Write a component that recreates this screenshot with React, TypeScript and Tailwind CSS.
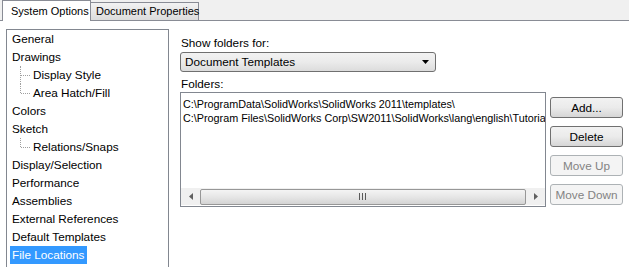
import React from "react";

const treeItems: { label: string; child?: boolean; last?: boolean }[] = [
  { label: "General" },
  { label: "Drawings" },
  { label: "Display Style", child: true },
  { label: "Area Hatch/Fill", child: true, last: true },
  { label: "Colors" },
  { label: "Sketch" },
  { label: "Relations/Snaps", child: true, last: true },
  { label: "Display/Selection" },
  { label: "Performance" },
  { label: "Assemblies" },
  { label: "External References" },
  { label: "Default Templates" },
  { label: "File Locations" },
];

function TreeRow({ label, child, last, selected }: { label: string; child?: boolean; last?: boolean; selected?: boolean }) {
  return (
    <div className="relative flex h-[18px] items-center">
      {child && (
        <>
          <span
            className={`absolute left-[13px] top-0 w-0 border-l border-dotted border-[#a0a0a0] ${last ? "h-[9px]" : "h-[18px]"}`}
          />
          <span className="absolute left-[14px] top-[9px] w-[9px] border-t border-dotted border-[#a0a0a0]" />
        </>
      )}
      <span
        className={`flex h-[18px] items-center whitespace-nowrap px-[2px] ${child ? "ml-[24px]" : "ml-[3px]"} ${
          selected ? "bg-[#3399ff] text-white" : "text-black"
        }`}
      >
        {label}
      </span>
    </div>
  );
}

function Button({ label, disabled }: { label: string; disabled?: boolean }) {
  return (
    <div
      className={`flex h-[21px] w-[73px] items-center justify-center rounded-[3px] border ${
        disabled
          ? "border-[#adb2b5] bg-[#f4f4f4] text-[#838383]"
          : "border-[#707070] bg-gradient-to-b from-[#f2f2f2] via-[#ebebeb] to-[#d6d6d6] text-black"
      }`}
    >
      {label}
    </div>
  );
}

export default function App() {
  return (
    <div
      className="h-[267px] w-[629px] overflow-hidden bg-white text-[11.75px] text-black"
      style={{ fontFamily: '"Liberation Sans", Arial, sans-serif' }}
    >
      {/* tabs */}
      <div className="flex h-[21px] items-end whitespace-nowrap border-b border-[#898c95] bg-[#f0f0f0] pl-[2px] text-[11px]">
        <div className="relative z-10 mb-[-1px] flex h-[21px] w-[89px] items-center border border-b-0 border-[#898c95] bg-white pl-[8px]">
          System Options
        </div>
        <div className="flex h-[18px] w-[108px] items-center border border-b-0 border-l-0 border-[#898c95] bg-gradient-to-b from-[#f2f2f2] to-[#dcdcdc] pl-[5px]">
          Document Properties
        </div>
      </div>

      <div className="flex">
        {/* tree */}
        <div className="ml-[6px] mt-[8px] h-[260px] w-[163px] shrink-0 border border-[#828790]">
          {treeItems.map((t, i) => (
            <TreeRow key={t.label} {...t} selected={i === treeItems.length - 1} />
          ))}
        </div>

        {/* right panel */}
        <div className="ml-[11px] mt-[14px] flex flex-col">
          <div className="h-[15px] pl-[1px] leading-[15px]">Show folders for:</div>
          <div className="mt-[2px] flex h-[20px] w-[256px] items-center justify-between rounded-[3px] border border-[#707070] bg-gradient-to-b from-[#f2f2f2] via-[#ebebeb] to-[#dcdcdc] pl-[4px] pr-[6px]">
            <span>Document Templates</span>
            <svg width="7" height="4" viewBox="0 0 7 4">
              <path d="M0 0h7L3.5 4z" fill="#000" />
            </svg>
          </div>
          <div className="mt-[4px] h-[15px] pl-[1px] leading-[15px]">Folders:</div>

          <div className="mt-[1px] flex items-start gap-[4px]">
            <div className="flex h-[115px] w-[366px] flex-col overflow-hidden border border-[#828790]">
              <div className="w-[364px] flex-1 overflow-hidden whitespace-nowrap pl-[2px] pt-[4px] text-[10.8px] leading-[14px]">
                <div className="overflow-hidden">C:\ProgramData\SolidWorks\SolidWorks 2011\templates\</div>
                <div className="overflow-hidden">C:\Program Files\SolidWorks Corp\SW2011\SolidWorks\lang\english\Tutorial</div>
              </div>
              {/* horizontal scrollbar */}
              <div className="mb-[1px] flex h-[17px] items-center bg-[#f0f0f0]">
                <div className="flex h-[17px] w-[19px] items-center justify-center">
                  <svg width="4" height="7" viewBox="0 0 4 7">
                    <path d="M4 0v7L0 3.5z" fill="#606060" />
                  </svg>
                </div>
                <div className="flex h-[16px] flex-1 items-center justify-center rounded-[2px] border border-[#979797] bg-gradient-to-b from-[#f4f4f4] via-[#e6e6e6] to-[#d4d4d4]">
                  <svg width="8" height="7" viewBox="0 0 8 7">
                    <path d="M0.5 0v7M3.5 0v7M6.5 0v7" stroke="#5a5a5a" strokeWidth="1" />
                  </svg>
                </div>
                <div className="flex h-[17px] w-[19px] items-center justify-center">
                  <svg width="4" height="7" viewBox="0 0 4 7">
                    <path d="M0 0v7L4 3.5z" fill="#606060" />
                  </svg>
                </div>
              </div>
            </div>

            <div className="mt-[5px] flex flex-col gap-[8px]">
              <Button label="Add..." />
              <Button label="Delete" />
              <Button label="Move Up" disabled />
              <Button label="Move Down" disabled />
            </div>
          </div>
        </div>
      </div>
    </div>
  );
}
